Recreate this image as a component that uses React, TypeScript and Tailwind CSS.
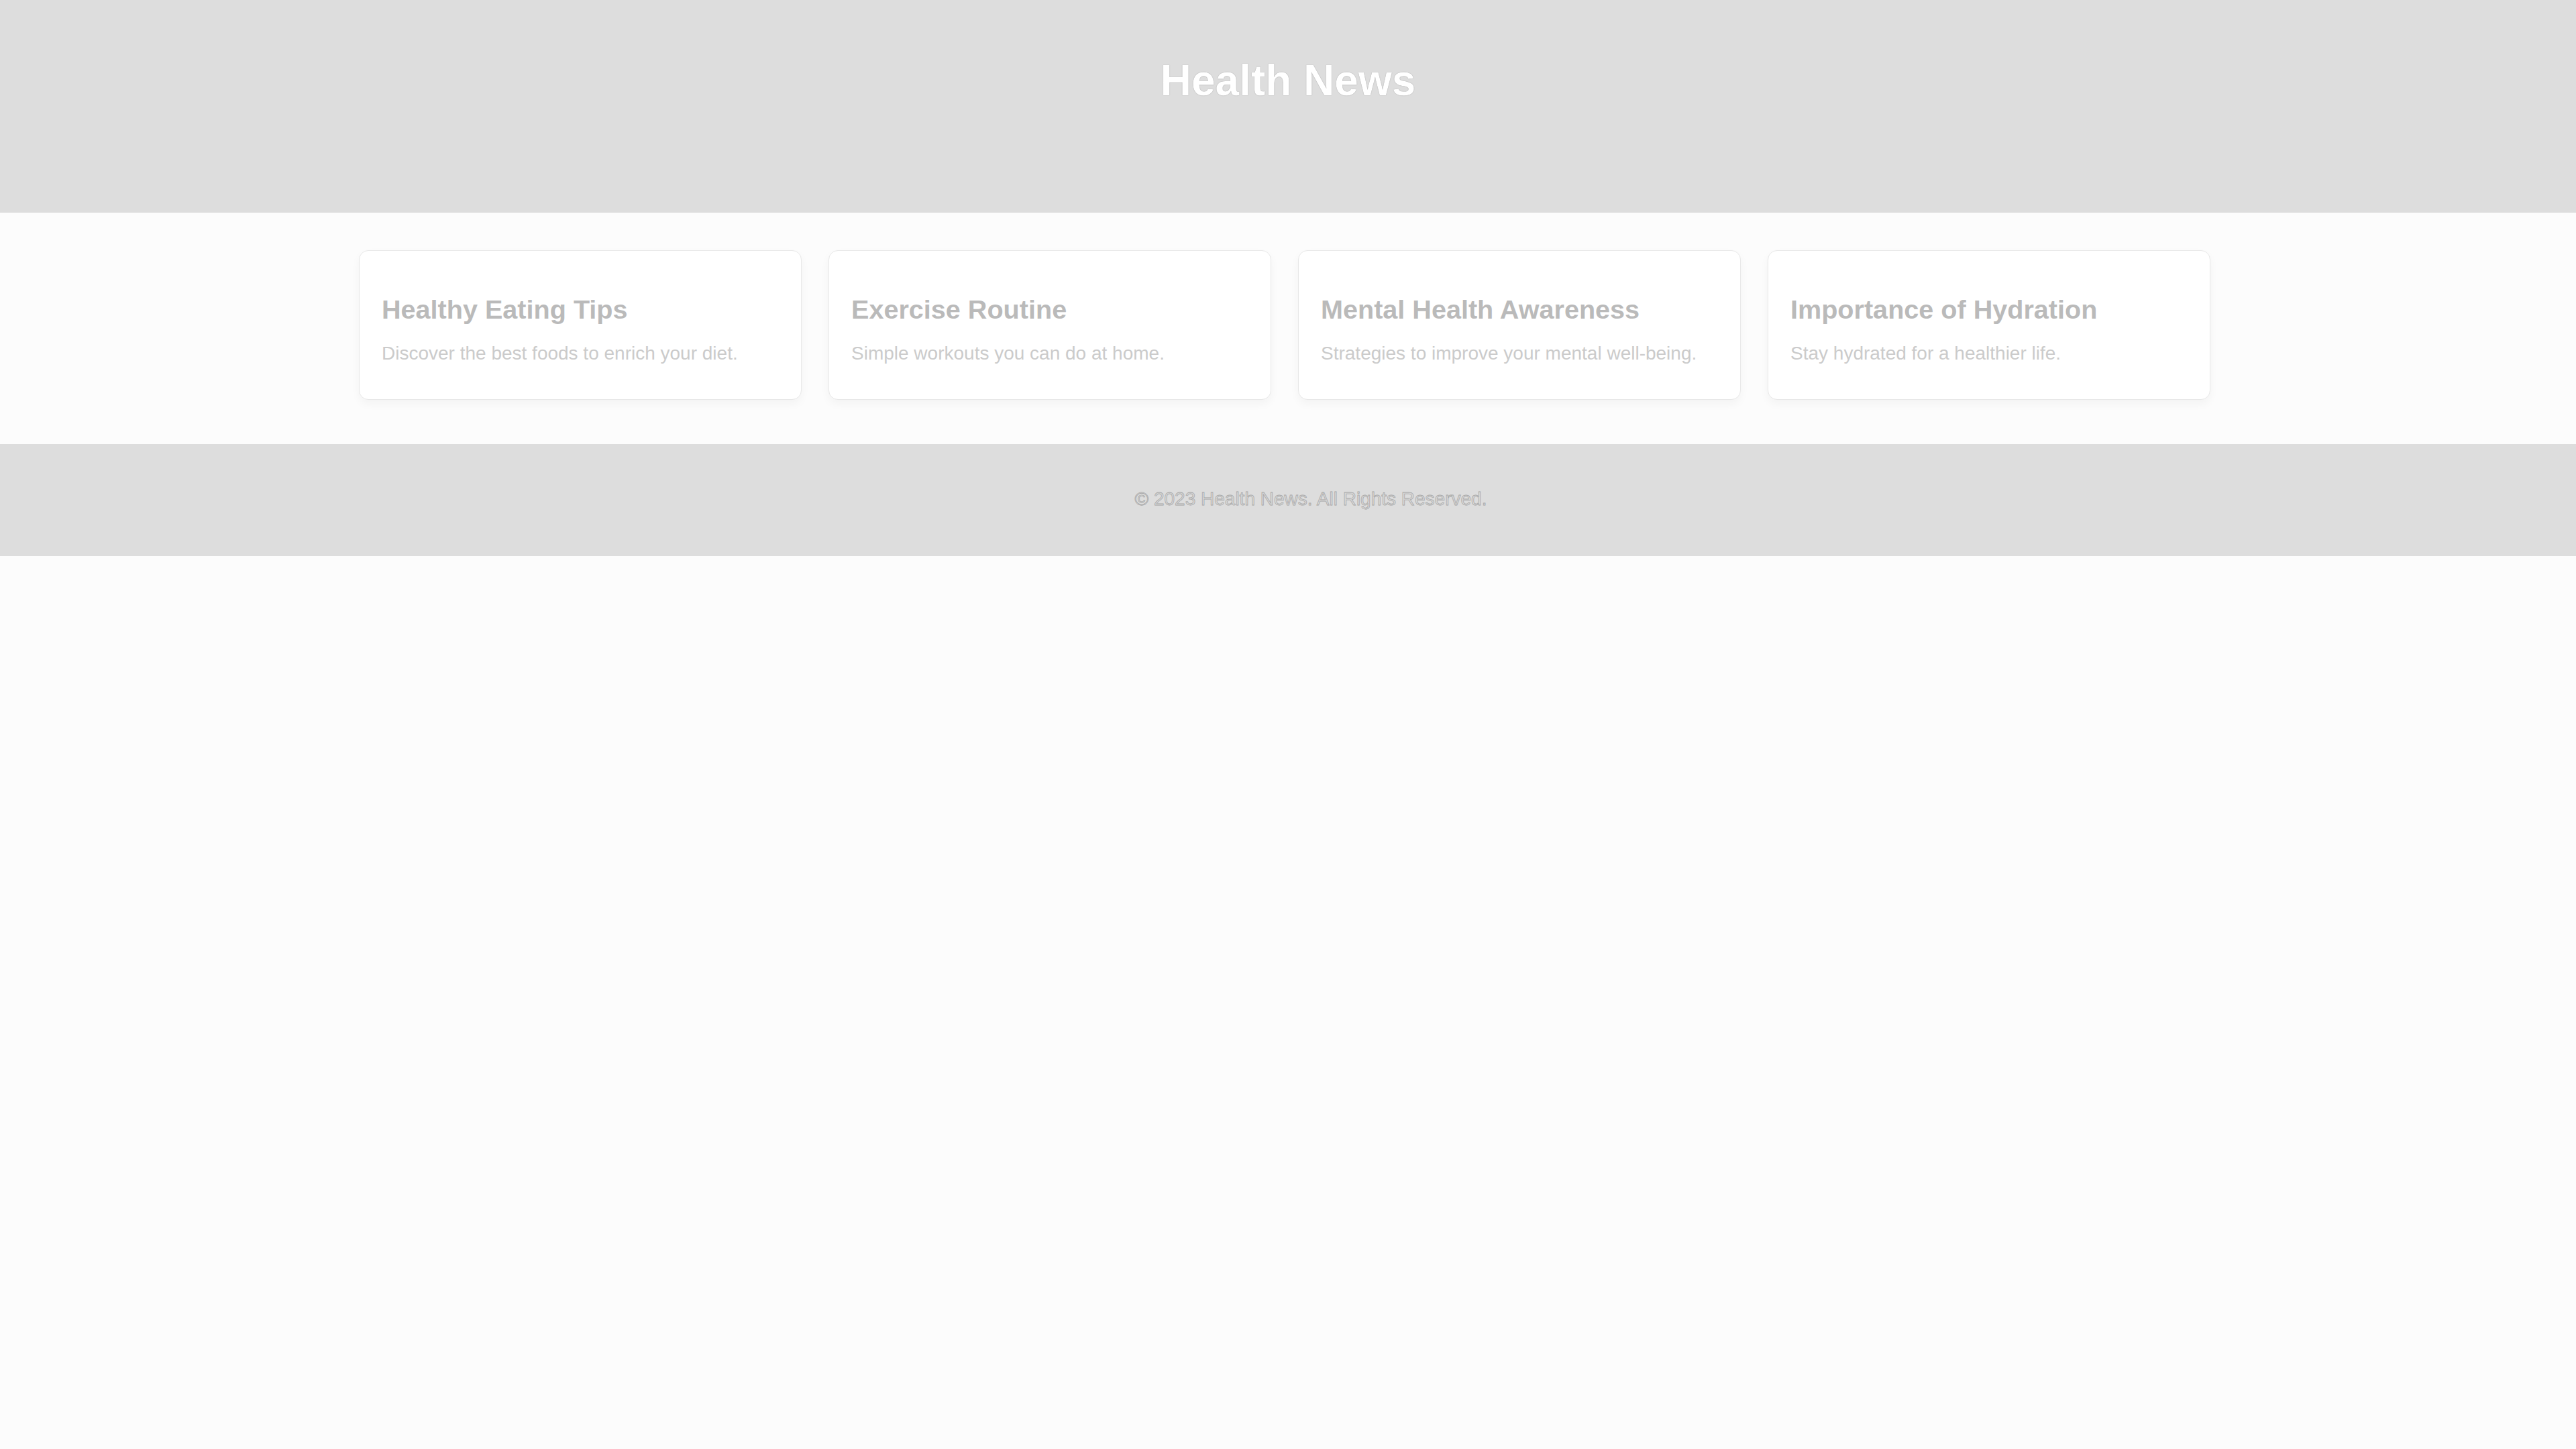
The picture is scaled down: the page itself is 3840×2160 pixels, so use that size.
import React from "react";

const cards = [
  { title: "Healthy Eating Tips", desc: "Discover the best foods to enrich your diet." },
  { title: "Exercise Routine", desc: "Simple workouts you can do at home." },
  { title: "Mental Health Awareness", desc: "Strategies to improve your mental well-being." },
  { title: "Importance of Hydration", desc: "Stay hydrated for a healthier life." },
];

export default function App() {
  return (
    <div className="min-h-screen bg-[#fcfcfc] font-['Liberation_Sans',Arial,sans-serif]">
      <header className="h-[317px] bg-[#dddddd] pt-[84px]">
        <h1 className="text-center text-[64px] font-bold leading-[73px] text-white [text-shadow:0_0_1px_rgba(0,0,0,0.45)]">
          Health News
        </h1>
      </header>
      <main className="flex justify-center pt-[56px] pb-[66px] pr-[10px]">
        <div className="grid w-[2760px] grid-cols-4 gap-[40px]">
          {cards.map((c) => (
            <div
              key={c.title}
              className="rounded-[14px] border border-[#e8e8e8] bg-white px-[33px] py-[32px] shadow-[0_6px_14px_rgba(0,0,0,0.04)]"
            >
              <h3 className="mt-[33px] text-[39.6px] font-bold leading-[45px] text-[#bababa]">{c.title}</h3>
              <p className="mt-[27px] mb-[20px] text-[28px] leading-[32px] text-[#cbcbcb]">{c.desc}</p>
            </div>
          ))}
        </div>
      </main>
      <footer className="h-[167px] bg-[#dddddd] pt-[65px] pl-[68px] text-center">
        <p className="text-[28px] leading-[33px] text-[#d9d9d9] [-webkit-text-stroke:0.8px_#a8a8a8]">
          © 2023 Health News. All Rights Reserved.
        </p>
      </footer>
    </div>
  );
}
